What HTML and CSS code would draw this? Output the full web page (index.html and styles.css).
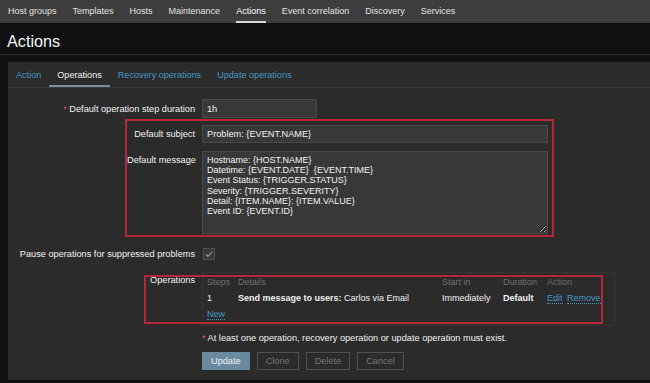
FILE: index.html
```html
<!DOCTYPE html>
<html lang="en">
<head>
  <meta charset="UTF-8" />
  <meta name="viewport" content="width=device-width, initial-scale=1.0"/>
  <title>Actions</title>
  <link rel="stylesheet" href="styles.css">
</head>
<body>

<nav class="topnav">
  <a href="#">Host groups</a>
  <a href="#">Templates</a>
  <a href="#">Hosts</a>
  <a href="#">Maintenance</a>
  <a href="#" class="active">Actions</a>
  <a href="#">Event correlation</a>
  <a href="#">Discovery</a>
  <a href="#">Services</a>
</nav>

<header class="page-header">
  <h1>Actions</h1>
</header>

<main class="panel">
  <div class="tabs">
    <a href="#" class="tab">Action</a>
    <a href="#" class="tab tab-active">Operations</a>
    <a href="#" class="tab">Recovery operations</a>
    <a href="#" class="tab">Update operations</a>
  </div>

  <form class="form">
    <div class="row row-center">
      <label class="label"><span class="req">*</span> Default operation step duration</label>
      <div class="field"><input class="input input-short" type="text" value="1h"></div>
    </div>

    <div class="highlight">
      <div class="row row-center">
        <label class="label label-inner">Default subject</label>
        <div class="field"><input class="input input-wide" type="text" value="Problem: {EVENT.NAME}"></div>
      </div>
      <div class="row row-message">
        <label class="label label-inner label-top">Default message</label>
        <div class="field">
          <textarea class="textarea">Hostname: {HOST.NAME}
Datetime: {EVENT.DATE}  {EVENT.TIME}
Event Status: {TRIGGER.STATUS}
Severity: {TRIGGER.SEVERITY}
Detail: {ITEM.NAME}: {ITEM.VALUE}
Event ID: {EVENT.ID}</textarea>
        </div>
      </div>
    </div>

    <div class="row row-center row-check">
      <label class="label">Pause operations for suppressed problems</label>
      <div class="field">
        <span class="checkbox">
          <svg width="10" height="10" viewBox="0 0 10 10"><path d="M1.8 5.2 L4 7.3 L8.3 2.6" fill="none" stroke="#8a8a8a" stroke-width="1.3"/></svg>
        </span>
      </div>
    </div>

    <div class="row row-ops">
      <label class="label label-ops">Operations</label>
      <div class="field">
        <div class="ops-box">
          <div class="ops-row ops-head">
            <span>Steps</span><span>Details</span><span>Start in</span><span>Duration</span><span>Action</span>
          </div>
          <div class="ops-row">
            <span>1</span>
            <span><b>Send message to users:</b> Carlos via Email</span>
            <span>Immediately</span>
            <span><b>Default</b></span>
            <span class="ops-actions"><a href="#" class="link">Edit</a> <a href="#" class="link">Remove</a></span>
          </div>
          <div class="ops-row">
            <span><a href="#" class="link">New</a></span>
          </div>
        </div>
      </div>
      <span class="mark"></span>
    </div>

    <div class="row row-note">
      <span class="label"></span>
      <p class="note"><span class="req">*</span> At least one operation, recovery operation or update operation must exist.</p>
    </div>

    <div class="row row-buttons">
      <span class="label"></span>
      <div class="buttons">
        <button type="button" class="btn btn-primary">Update</button>
        <button type="button" class="btn">Clone</button>
        <button type="button" class="btn">Delete</button>
        <button type="button" class="btn">Cancel</button>
      </div>
    </div>
  </form>
</main>

</body>
</html>
```

FILE: styles.css
```css
* {
  box-sizing: border-box;
}

body {
  margin: 0;
  background-color: #0e1012;
  color: #f2f2f2;
  font-family: "Liberation Sans", Arial, sans-serif;
  font-size: 9px;
}

a {
  text-decoration: none;
}

/* Top navigation */
.topnav {
  display: flex;
  height: 23px;
  padding-left: 8px;
  background-color: #3d3d3d;
}

.topnav a {
  margin-right: 16px;
  padding-top: 2px;
  line-height: 19px;
  color: #e2e2e2;
  border-bottom: 2px solid transparent;
}

.topnav a.active {
  color: #ffffff;
  border-bottom-color: #d8d8d8;
}

/* Page header */
.page-header {
  height: 32px;
  padding: 8px 0 0 7px;
  border-bottom: 1px solid #2c2e30;
}

.page-header h1 {
  margin: 0;
  font-size: 16.2px;
  font-weight: normal;
  line-height: 20px;
  color: #f4f4f4;
}

/* Main panel */
.panel {
  height: 318px;
  margin: 7px 0 0 8px;
  background-color: #2b2b2b;
}

.tabs {
  display: flex;
  border-bottom: 1px solid #383838;
}

.tab {
  padding: 7px 8px 4px;
  font-size: 9.1px;
  line-height: 12px;
  color: #4796c4;
  border-bottom: 2px solid transparent;
}

.tab-active {
  color: #f2f2f2;
  border-bottom-color: #7f8f99;
}

/* Form */
.form {
  padding-top: 11px;
  font-size: 9.2px;
}

.row {
  display: flex;
}

.row-center {
  align-items: center;
}

.label {
  flex: none;
  width: 187px;
  margin-right: 7px;
  text-align: right;
  white-space: nowrap;
  line-height: 12px;
}

.label-inner {
  width: 68px;
}

.label-top {
  padding-top: 3px;
}

.req {
  color: #e45959;
}

.input,
.textarea {
  display: block;
  padding: 0 4px;
  background-color: #383838;
  border: 1px solid #4a4a4a;
  color: #f2f2f2;
  font-family: inherit;
  font-size: 9.2px;
}

.input-short {
  width: 115px;
  height: 19px;
}

.input-wide {
  width: 346px;
  height: 18px;
}

.textarea {
  width: 346px;
  height: 83px;
  padding: 3px 4px;
  font-size: 9px;
  line-height: 10.2px;
}

.highlight {
  width: 429px;
  margin: 1px 0 0 117px;
  padding: 4px 0 1px;
  border: 2px solid #b3283b;
}

.row-message {
  margin-top: 8px;
}

.row-check {
  margin-top: 11px;
}

.checkbox {
  display: flex;
  align-items: center;
  justify-content: center;
  width: 12px;
  height: 12px;
  margin-left: 1px;
  background-color: #383838;
  border: 1px solid #4f4f4f;
}

/* Operations list */
.row-ops {
  position: relative;
  margin-top: 12px;
}

.label-ops {
  padding-top: 2px;
}

.ops-box {
  width: 413px;
  padding: 1px 0 3px 4px;
  border: 1px solid #353535;
  font-size: 9px;
}

.ops-row {
  display: grid;
  grid-template-columns: 31px 204px 61px 44px auto;
  height: 16px;
  align-items: center;
  white-space: nowrap;
}

.ops-head {
  color: #6e6e6e;
}

.ops-actions a + a {
  margin-left: 2px;
}

.link {
  color: #4796c4;
  border-bottom: 1px dotted #4796c4;
}

.mark {
  position: absolute;
  left: 136px;
  top: 3px;
  width: 459px;
  height: 49px;
  border: 2px solid #b3283b;
  pointer-events: none;
}

.row-note {
  margin-top: 6px;
}

.note {
  margin: 0;
  line-height: 12px;
}

.row-buttons {
  margin-top: 8px;
}

.buttons {
  display: flex;
  gap: 7px;
}

.btn {
  height: 18px;
  padding: 0 8px;
  background: transparent;
  border: 1px solid #4f4f4f;
  color: #767676;
  font-family: inherit;
  font-size: 9.2px;
  cursor: pointer;
}

.btn-primary {
  background-color: #6a8a9f;
  border-color: #6a8a9f;
  color: #eef2f4;
}
```
